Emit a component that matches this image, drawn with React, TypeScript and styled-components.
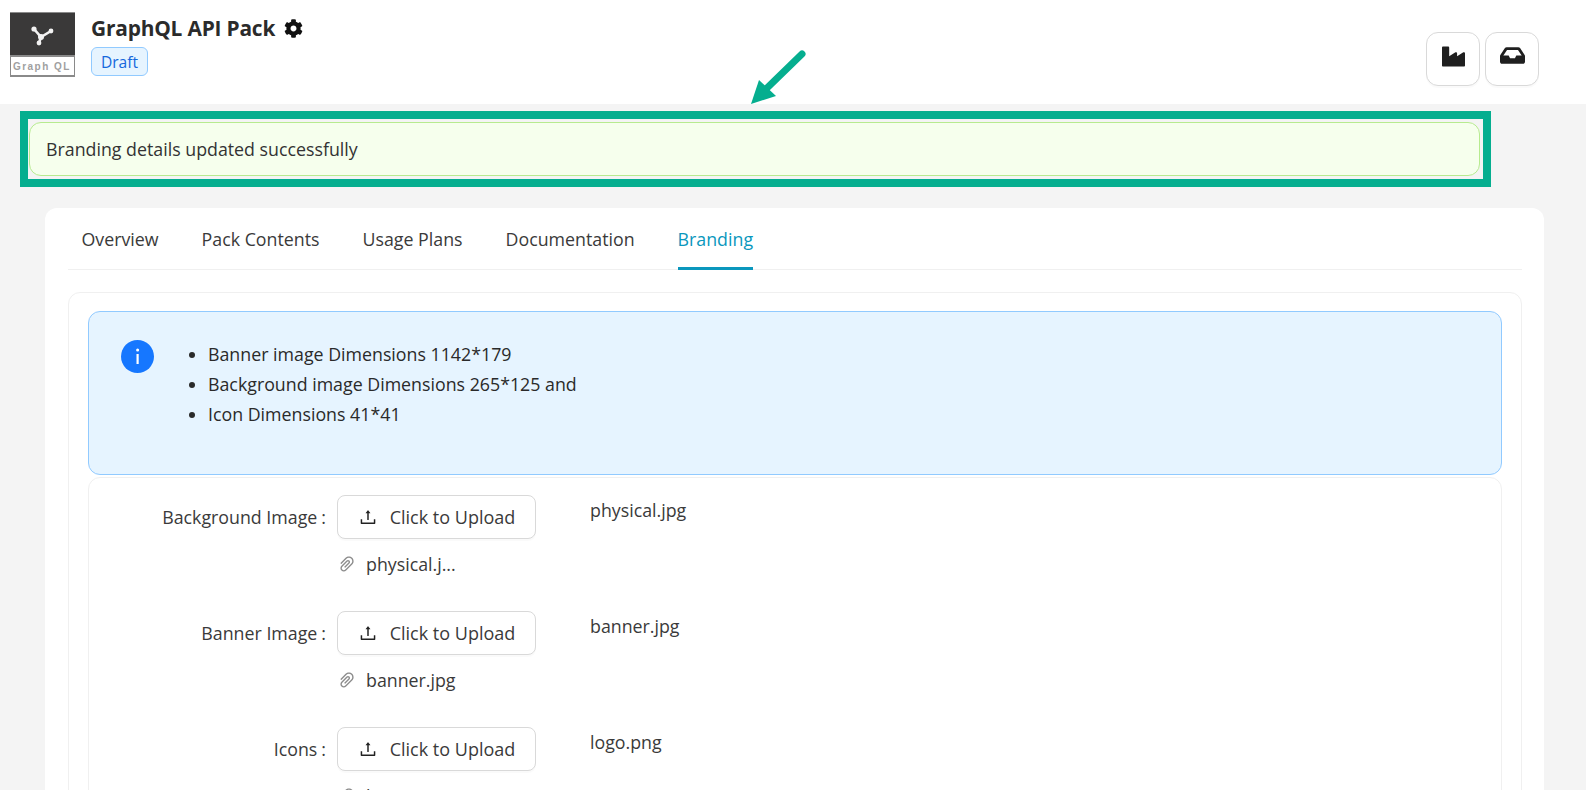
import React from "react";
import styled, { createGlobalStyle } from "styled-components";
import { FaCog, FaIndustry, FaInbox } from "react-icons/fa";
import { AiOutlineUpload, AiOutlinePaperClip } from "react-icons/ai";

const Global = createGlobalStyle`
  html, body { margin: 0; padding: 0; height: 790px; overflow: hidden; background: #f4f4f4; }
  body { font-family: "Open Sans", "Noto Sans", "Liberation Sans", sans-serif; color: #1f1f1f; }
  * { box-sizing: border-box; }
`;

const Page = styled.div`
  position: relative;
  width: 1586px;
  height: 790px;
  overflow: hidden;
`;

const Header = styled.header`
  height: 104px;
  background: #fff;
  display: flex;
  justify-content: space-between;
  padding: 12px 47px 0 10px;
`;

const Identity = styled.div`
  display: flex;
  gap: 16px;
`;

const Logo = styled.svg`
  display: block;
  width: 65px;
  height: 65px;
`;

const TitleBlock = styled.div`
  display: flex;
  flex-direction: column;
  align-items: flex-start;
`;

const TitleRow = styled.div`
  display: flex;
  align-items: center;
  gap: 9px;
  height: 32px;
`;

const Title = styled.h1`
  margin: 0;
  font-size: 20.9px;
  font-weight: 700;
  line-height: 32px;
  color: #2b2b2b;
  letter-spacing: -0.2px;
`;

const Tag = styled.span`
  margin-top: 3px;
  width: 57px;
  height: 29px;
  display: flex;
  align-items: center;
  justify-content: center;
  background: #e6f4ff;
  border: 1px solid #91caff;
  border-radius: 6px;
  color: #1668dc;
  font-size: 15.6px;
`;

const Actions = styled.div`
  display: flex;
  gap: 5px;
  padding-top: 20px;
`;

const IconButton = styled.button<{ $wide?: boolean }>`
  width: 54px;
  height: 54px;
  padding: 0 0 ${(p) => (p.$wide ? "8px" : "6px")};
  display: flex;
  align-items: center;
  justify-content: center;
  background: #fff;
  border: 1px solid #d9d9d9;
  border-radius: 12px;
  box-shadow: 0 2px 0 rgba(0, 0, 0, 0.02);
  color: #1f1f1f;
  font-size: ${(p) => (p.$wide ? "25px" : "23px")};
`;

const Notice = styled.div`
  width: 1471px;
  height: 76px;
  margin: 7px 0 0 20px;
  border: 8px solid #05ae8f;
  padding: 3px 0 0 1px;
`;

const SuccessAlert = styled.div`
  width: 1451px;
  height: 54px;
  display: flex;
  align-items: center;
  padding: 0 16px;
  background: #f6ffed;
  border: 1px solid #b7eb8f;
  border-radius: 12px;
  font-size: 17.8px;
  color: #333;
`;

const Card = styled.main`
  width: 1499px;
  height: 620px;
  margin: 21px 0 0 45px;
  padding: 0 22px 0 23px;
  background: #fff;
  border-radius: 12px;
`;

const Tabs = styled.nav`
  display: flex;
  gap: 43px;
  height: 62px;
  padding-left: 13.5px;
  border-bottom: 1px solid #f0f0f0;
`;

const Tab = styled.a<{ $active?: boolean }>`
  height: 62px;
  display: flex;
  align-items: center;
  font-size: 17.8px;
  color: ${(p) => (p.$active ? "#0a97bd" : "#3a3a3a")};
  border-bottom: 3px solid ${(p) => (p.$active ? "#0a97bd" : "transparent")};
  padding-top: 3px;
`;

const Inner = styled.section`
  height: 520px;
  margin-top: 22px;
  padding: 18px 19px 0 19px;
  border: 1px solid #f0f0f0;
  border-radius: 12px;
`;

const InfoAlert = styled.div`
  height: 164px;
  display: flex;
  padding: 28px 32px;
  background: #e6f4ff;
  border: 1px solid #91caff;
  border-radius: 12px;
`;

const InfoIcon = styled.svg`
  flex: none;
  width: 33px;
  height: 33px;
  margin-right: 33px;
`;

const InfoList = styled.ul`
  margin: -1px 0 0;
  padding: 0 0 0 21px;
  font-size: 17.8px;
  line-height: 30px;
  color: #2a2a2a;
`;

const FormPanel = styled.div`
  height: 340px;
  margin-top: 2px;
  border: 1px solid #f0f0f0;
  border-radius: 12px;
  padding-top: 17px;
`;

const Row = styled.div`
  display: flex;
  height: 116px;
`;

const Label = styled.label`
  width: 248px;
  height: 44px;
  display: flex;
  align-items: center;
  justify-content: flex-end;
  font-size: 17.8px;
  color: #3a3a3a;
`;

const Colon = styled.span`
  margin: 0 11px 0 4px;
`;

const Uploader = styled.div`
  width: 199px;
  margin-right: 54px;
`;

const UploadButton = styled.button`
  width: 199px;
  height: 44px;
  display: flex;
  align-items: center;
  justify-content: center;
  gap: 12px;
  padding: 0;
  background: #fff;
  border: 1px solid #d9d9d9;
  border-radius: 8px;
  box-shadow: 0 2px 0 rgba(0, 0, 0, 0.02);
  font-family: inherit;
  font-size: 18px;
  color: #3a3a3a;
  svg { font-size: 20px; color: #222; }
`;

const Attachment = styled.div`
  display: flex;
  align-items: center;
  gap: 9px;
  height: 24px;
  margin-top: 13px;
  font-size: 17.8px;
  color: #3a3a3a;
  svg { font-size: 20px; color: #8c8c8c; }
`;

const FileName = styled.div`
  padding-top: 3px;
  font-size: 17.8px;
  line-height: 24px;
  color: #3a3a3a;
`;

const Arrow = styled.svg`
  position: absolute;
  left: 745px;
  top: 45px;
  width: 65px;
  height: 65px;
`;

const rows = [
  { label: "Background Image", attachment: "physical.j...", file: "physical.jpg" },
  { label: "Banner Image", attachment: "banner.jpg", file: "banner.jpg" },
  { label: "Icons", attachment: "logo.png", file: "logo.png" },
];

export default function App() {
  return (
    <Page>
      <Global />
      <Header>
        <Identity>
          <Logo viewBox="0 0 65 65">
            <rect width="65" height="65" fill="#8a8a8a" />
            <rect y="1" width="65" height="42" fill="#3a3939" />
            <rect x="1" y="45" width="63" height="18" fill="#fff" />
            <path d="M24 17 L31 25 L41 19 M31 25 L29 31" stroke="#f2f2f2" strokeWidth="2.6" fill="none" />
            <circle cx="24" cy="17" r="2.6" fill="#f2f2f2" />
            <circle cx="41" cy="19" r="2.4" fill="#f2f2f2" />
            <circle cx="29" cy="31" r="2.4" fill="#f2f2f2" />
            <circle cx="31" cy="25" r="3" fill="#f2f2f2" />
            <text x="3" y="58" fontFamily="'Liberation Sans', sans-serif" fontSize="10" fontWeight="700" fill="#a0a0a0" letterSpacing="1.45">Graph QL</text>
          </Logo>
          <TitleBlock>
            <TitleRow>
              <Title>GraphQL API Pack</Title>
              <FaCog size={19} color="#111" />
            </TitleRow>
            <Tag>Draft</Tag>
          </TitleBlock>
        </Identity>
        <Actions>
          <IconButton aria-label="Factory"><FaIndustry /></IconButton>
          <IconButton aria-label="Inbox" $wide><FaInbox /></IconButton>
        </Actions>
      </Header>
      <Notice>
        <SuccessAlert>Branding details updated successfully</SuccessAlert>
      </Notice>
      <Card>
        <Tabs>
          <Tab>Overview</Tab>
          <Tab>Pack Contents</Tab>
          <Tab>Usage Plans</Tab>
          <Tab>Documentation</Tab>
          <Tab $active>Branding</Tab>
        </Tabs>
        <Inner>
          <InfoAlert>
            <InfoIcon viewBox="0 0 33 33">
              <circle cx="16.5" cy="16.5" r="16.5" fill="#1677ff" />
              <rect x="15.5" y="14" width="2.2" height="10" fill="#fff" />
              <circle cx="16.6" cy="10" r="1.5" fill="#fff" />
            </InfoIcon>
            <InfoList>
              <li>Banner image Dimensions 1142*179</li>
              <li>Background image Dimensions 265*125 and</li>
              <li>Icon Dimensions 41*41</li>
            </InfoList>
          </InfoAlert>
          <FormPanel>
            {rows.map((r) => (
              <Row key={r.label}>
                <Label>{r.label}<Colon>:</Colon></Label>
                <Uploader>
                  <UploadButton><AiOutlineUpload />Click to Upload</UploadButton>
                  <Attachment><AiOutlinePaperClip />{r.attachment}</Attachment>
                </Uploader>
                <FileName>{r.file}</FileName>
              </Row>
            ))}
          </FormPanel>
        </Inner>
      </Card>
      <Arrow viewBox="0 0 65 65">
        <path d="M57 9 L22 43" stroke="#05ae8f" strokeWidth="7" strokeLinecap="round" fill="none" />
        <polygon points="6,59 14,35 31,51" fill="#05ae8f" />
      </Arrow>
    </Page>
  );
}
